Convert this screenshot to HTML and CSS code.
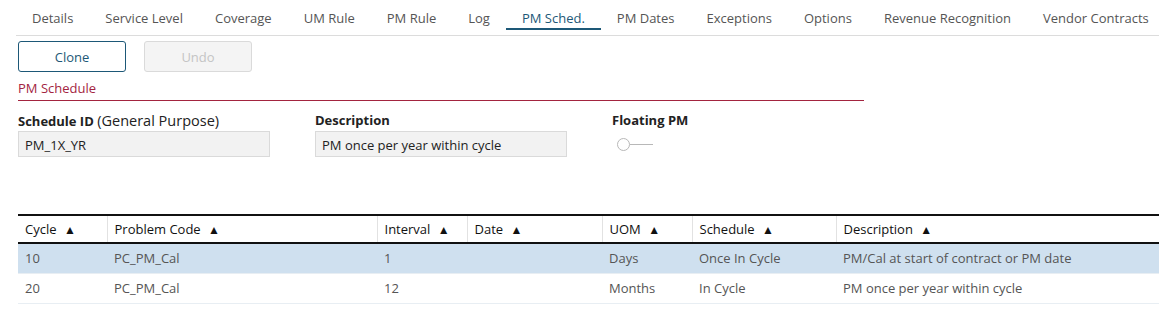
FILE: index.html
```html
<!DOCTYPE html>
<html>
<head>
    <title>PM Schedule</title>
    <meta charset="UTF-8">
    <link rel="stylesheet" href="styles.css">
</head>
<body>
    <div class="tabs">
        <a class="tab">Details</a>
        <a class="tab">Service Level</a>
        <a class="tab">Coverage</a>
        <a class="tab">UM Rule</a>
        <a class="tab">PM Rule</a>
        <a class="tab">Log</a>
        <a class="tab active">PM Sched.</a>
        <a class="tab">PM Dates</a>
        <a class="tab">Exceptions</a>
        <a class="tab">Options</a>
        <a class="tab">Revenue Recognition</a>
        <a class="tab">Vendor Contracts</a>
    </div>

    <div class="content">
        <div class="button-group">
            <button class="btn primary">Clone</button>
            <button class="btn disabled">Undo</button>
        </div>

        <div class="section-title">PM Schedule</div>

        <div class="fields">
            <div class="field">
                <label><b>Schedule ID</b> <span class="hint">(General Purpose)</span></label>
                <div class="input">PM_1X_YR</div>
            </div>
            <div class="field">
                <label><b>Description</b></label>
                <div class="input">PM once per year within cycle</div>
            </div>
            <div class="field">
                <label><b>Floating PM</b></label>
                <div class="toggle"><span class="knob"></span><span class="track"></span></div>
            </div>
        </div>

        <div class="grid-wrap">
            <table class="grid">
                <colgroup>
                    <col style="width: 89px">
                    <col style="width: 270px">
                    <col style="width: 90px">
                    <col style="width: 135px">
                    <col style="width: 90px">
                    <col style="width: 144px">
                    <col>
                </colgroup>
                <thead>
                    <tr>
                        <th>Cycle <span class="sort">▲</span></th>
                        <th>Problem Code <span class="sort">▲</span></th>
                        <th>Interval <span class="sort">▲</span></th>
                        <th>Date <span class="sort">▲</span></th>
                        <th>UOM <span class="sort">▲</span></th>
                        <th>Schedule <span class="sort">▲</span></th>
                        <th>Description <span class="sort">▲</span></th>
                    </tr>
                </thead>
                <tbody>
                    <tr class="selected">
                        <td>10</td>
                        <td>PC_PM_Cal</td>
                        <td>1</td>
                        <td></td>
                        <td>Days</td>
                        <td>Once In Cycle</td>
                        <td>PM/Cal at start of contract or PM date</td>
                    </tr>
                    <tr>
                        <td>20</td>
                        <td>PC_PM_Cal</td>
                        <td>12</td>
                        <td></td>
                        <td>Months</td>
                        <td>In Cycle</td>
                        <td>PM once per year within cycle</td>
                    </tr>
                </tbody>
            </table>
        </div>
    </div>
</body>
</html>
```

FILE: styles.css
```css
* {
    box-sizing: border-box;
    margin: 0;
    padding: 0;
}

body {
    font-family: 'Open Sans', 'Noto Sans', sans-serif;
    font-size: 13px;
    color: #222;
    background: #fff;
    overflow: hidden;
}

.tabs {
    display: flex;
    margin-left: 16px;
    height: 36px;
    border-bottom: 1px solid #dcdcdc;
}

.tab {
    padding: 9px 16px 0;
    height: 30px;
    color: #555;
    white-space: nowrap;
    border-bottom: 2px solid transparent;
}

.tab.active {
    color: #1d5877;
    border-bottom-color: #1d5877;
}

.content {
    padding-left: 18px;
}

.button-group {
    display: flex;
    gap: 18px;
    margin-top: 5px;
}

.btn {
    width: 108px;
    height: 31px;
    border-radius: 3px;
    font-family: inherit;
    font-size: 13px;
    background: #fff;
}

.btn.primary {
    border: 1px solid #1d5877;
    color: #1d5877;
}

.btn.disabled {
    border: 1px solid #dadada;
    background: #f4f4f4;
    color: #c4c4c4;
}

.section-title {
    width: 846px;
    margin-top: 7px;
    padding-bottom: 3px;
    color: #a3243f;
    border-bottom: 1px solid #a3243f;
}

.fields {
    display: flex;
    gap: 45px;
    margin-top: 10px;
}

.field label {
    display: block;
    height: 19px;
    line-height: 19px;
    color: #222;
    margin-bottom: 1px;
}

.field label .hint {
    font-size: 14.5px;
}

.input {
    width: 252px;
    height: 26px;
    padding: 4px 6px;
    background: #f2f2f2;
    border: 1px solid #dadada;
    color: #222;
}

.toggle {
    display: flex;
    align-items: center;
    height: 26px;
    padding-left: 5px;
}

.knob {
    width: 13px;
    height: 13px;
    border: 1px solid #b8b8b8;
    border-radius: 50%;
}

.track {
    width: 23px;
    height: 1px;
    background: #b8b8b8;
}

.grid-wrap {
    margin-top: 57px;
    width: 1160px;
}

.grid {
    width: 1160px;
    border-collapse: collapse;
    table-layout: fixed;
}

.grid th {
    height: 28px;
    text-align: left;
    font-weight: normal;
    color: #111;
    padding: 0 7px;
    border-top: 2px solid #111;
    border-bottom: 2px solid #111;
    border-left: 1px solid #e2e2e2;
}

.grid th:first-child {
    border-left: 0;
}

.sort {
    font-size: 12px;
    margin-left: 4px;
}

.grid td {
    height: 30px;
    padding: 0 7px;
    color: #555;
    border-bottom: 1px solid #e8eef3;
}

.grid tr.selected td {
    background: #cfe0ef;
}
```
